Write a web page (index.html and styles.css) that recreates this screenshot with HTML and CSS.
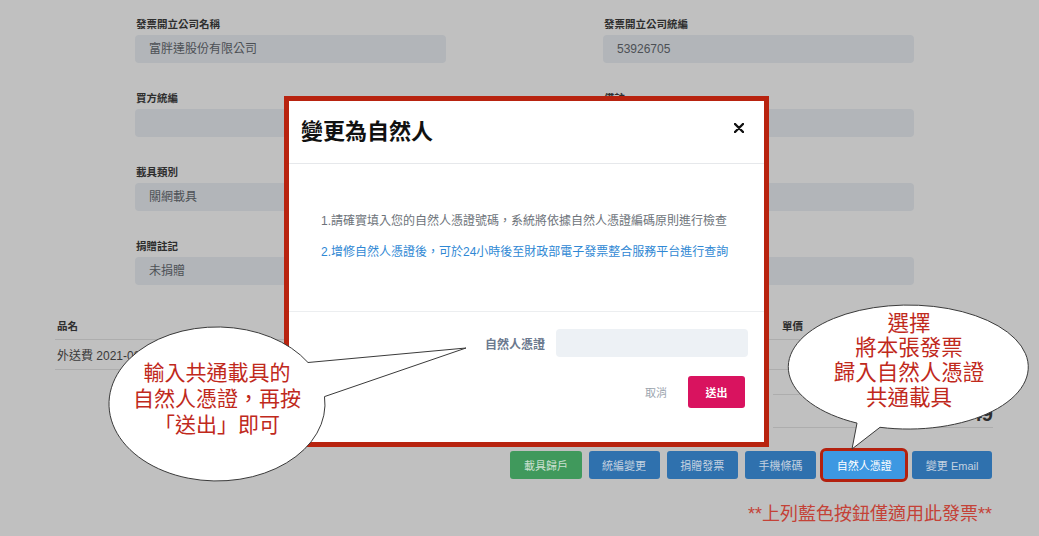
FILE: index.html
```html
<!DOCTYPE html>
<html lang="zh-Hant">
<head>
<meta charset="utf-8">
<title>變更為自然人</title>
<link rel="stylesheet" href="styles.css">
</head>
<body>
<div class="page">
  <div class="form">
    <div class="field"><label>發票開立公司名稱</label><div class="input">富胖達股份有限公司</div></div>
    <div class="field"><label>發票開立公司統編</label><div class="input">53926705</div></div>
    <div class="field"><label>買方統編</label><div class="input"></div></div>
    <div class="field"><label>備註</label><div class="input"></div></div>
    <div class="field"><label>載具類別</label><div class="input">關網載具</div></div>
    <div class="field"><label>載具號碼</label><div class="input"></div></div>
    <div class="field"><label>捐贈註記</label><div class="input">未捐贈</div></div>
    <div class="field"><label></label><div class="input"></div></div>
  </div>

  <div class="items">
    <div class="row head"><span>品名</span><span>單價</span><span></span><span></span></div>
    <div class="row body"><span>外送費 2021-08-01</span><span></span><span></span><span></span></div>
  </div>
  <div class="totals">
    <div class="trow"></div>
    <div class="trow total"><span>49</span></div>
  </div>

  <div class="actions">
    <button class="btn green">載具歸戶</button>
    <button class="btn blue">統編變更</button>
    <button class="btn blue">捐贈發票</button>
    <button class="btn blue">手機條碼</button>
    <button class="btn active">自然人憑證</button>
    <button class="btn blue">變更 Email</button>
  </div>
  <p class="note">**上列藍色按鈕僅適用此發票**</p>
</div>

<div class="modal">
  <div class="modal-header">
    <h2 class="modal-title">變更為自然人</h2>
    <span class="close"><svg width="10" height="10" viewBox="0 0 10 10"><path d="M1 1 L9 9 M9 1 L1 9" stroke="#111" stroke-width="2.4" stroke-linecap="round"/></svg></span>
  </div>
  <div class="modal-body">
    <p class="hint">1.請確實填入您的自然人憑證號碼，系統將依據自然人憑證編碼原則進行檢查</p>
    <p class="hint blue-text">2.增修自然人憑證後，可於24小時後至財政部電子發票整合服務平台進行查詢</p>
  </div>
  <div class="modal-footer">
    <div class="cert-row">
      <label class="cert-label">自然人憑證</label>
      <div class="cert-input"></div>
    </div>
    <div class="modal-actions">
      <button class="cancel">取消</button>
      <button class="submit">送出</button>
    </div>
  </div>
</div>

<div class="callout callout-left">
  <svg width="370" height="170" viewBox="0 0 370 170"><path d="M208 42.5 L366 28 L224.5 76.6 A108 77 0 1 1 208 42.5 Z" fill="#fff" stroke="#3a3a3a" stroke-width="1"/></svg>
  <div class="callout-text left-text">輸入共通載具的<br>自然人憑證，再按<br>「送出」即可</div>
</div>

<div class="callout callout-right">
  <svg width="259" height="160" viewBox="0 0 259 160"><path d="M100 129.3 L72 151 L77 125.1 A120 62 0 1 1 100 129.3 Z" fill="#fff" stroke="#3a3a3a" stroke-width="1"/></svg>
  <div class="callout-text right-text">選擇<br>將本張發票<br>歸入自然人憑證<br>共通載具</div>
</div>
</body>
</html>
```

FILE: styles.css
```css
* { box-sizing: border-box; }
html, body { margin: 0; padding: 0; }
body {
  width: 1039px;
  height: 536px;
  overflow: hidden;
  background: #c0c0c0;
  font-family: "Liberation Sans", "Noto Sans CJK TC", sans-serif;
  color: #333;
  position: relative;
}
.page { padding-top: 17px; }

.form {
  display: grid;
  grid-template-columns: 311px 311px;
  column-gap: 157px;
  row-gap: 28px;
  margin-left: 135px;
}
.field { display: flex; flex-direction: column; gap: 4px; }
.field label {
  height: 14px;
  font-size: 10.5px;
  line-height: 14px;
  font-weight: 700;
  color: #2e2e2e;
  padding-left: 1px;
}
.input {
  height: 28px;
  background: #b2b5b9;
  border-radius: 4px;
  font-size: 12px;
  line-height: 28px;
  color: #4c5055;
  padding-left: 14px;
}

.items { margin: 27px 46px 0 55px; }
.row {
  display: grid;
  grid-template-columns: 725px 71px 71px 71px;
  border-bottom: 1px solid #adadad;
  align-items: center;
  padding-left: 2px;
}
.row.head { height: 28px; font-size: 10.5px; font-weight: 700; color: #2e2e2e; }
.row.body { height: 30px; font-size: 12px; color: #3a3a3a; }

.totals { width: 220px; margin: 0 46px 0 auto; }
.trow {
  display: flex;
  justify-content: flex-end;
  align-items: center;
  border-bottom: 1px solid #adadad;
  height: 25px;
  font-size: 12px;
}
.trow.total { height: 33px; font-size: 20px; font-weight: 700; padding-top: 6px; color: #2e2e2e; }

.actions {
  display: flex;
  justify-content: flex-end;
  gap: 7px;
  margin: 23px 47px 0 0;
}
.btn {
  height: 28px;
  padding: 0 13.6px;
  border: 0;
  border-radius: 3px;
  font-family: inherit;
  font-size: 11px;
  color: #c4d2e0;
}
.btn.green { background: #40995c; color: #cbe0d1; }
.btn.blue { background: #2f71ae; }
.btn.active {
  background: #3d98e2;
  color: #fff;
  outline: 3px solid #b3210f;
}
.note {
  margin: 23px 47px 0 0;
  text-align: right;
  font-size: 18px;
  line-height: 24px;
  color: #c44237;
}

.modal {
  position: absolute;
  left: 284px;
  top: 96px;
  width: 485px;
  height: 351px;
  border: 5px solid #b8230f;
  background: #fff;
  display: flex;
  flex-direction: column;
}
.modal-header {
  height: 63px;
  border-bottom: 1px solid #e6e8eb;
  display: flex;
  justify-content: space-between;
  align-items: center;
  padding: 0 20px 0 12px;
}
.modal-title {
  margin: 0;
  font-size: 22px;
  line-height: 30px;
  font-weight: 700;
  color: #111;
}
.close { display: flex; align-self: flex-start; margin-top: 22px; }
.modal-body {
  height: 148px;
  border-bottom: 1px solid #eceef0;
  padding: 48px 0 0 32px;
}
.hint {
  margin: 0;
  font-size: 12px;
  line-height: 18px;
  color: #6d737a;
}
.hint.blue-text { margin-top: 13px; color: #2f88d4; }
.modal-footer { padding: 17px 16px 0 0; }
.cert-row {
  display: flex;
  justify-content: flex-end;
  align-items: center;
  gap: 11px;
}
.cert-label { font-size: 12px; font-weight: 700; color: #6b798e; }
.cert-input {
  width: 192px;
  height: 28px;
  background: #edf1f5;
  border-radius: 4px;
}
.modal-actions {
  display: flex;
  justify-content: flex-end;
  align-items: center;
  margin-top: 19px;
  padding-right: 3px;
}
.cancel {
  border: 0;
  background: transparent;
  font-family: inherit;
  font-size: 11px;
  color: #9aa3ad;
  padding: 0 10px;
  margin-right: 11px;
}
.submit {
  width: 57px;
  height: 32px;
  border: 0;
  border-radius: 3px;
  background: #d9135f;
  color: #fff;
  font-family: inherit;
  font-size: 11px;
  font-weight: 700;
}

.callout { position: absolute; }
.callout svg { display: block; }
.callout-left { left: 100px; top: 320px; width: 370px; height: 170px; }
.callout-right { left: 780px; top: 298px; width: 259px; height: 160px; }
.callout-text {
  position: absolute;
  text-align: center;
  color: #c0291c;
  white-space: nowrap;
}
.left-text { left: 7px; width: 220px; top: 40px; font-size: 21px; line-height: 26px; }
.right-text { left: 9px; width: 240px; top: 13.5px; font-size: 21.5px; line-height: 24.7px; }
```
